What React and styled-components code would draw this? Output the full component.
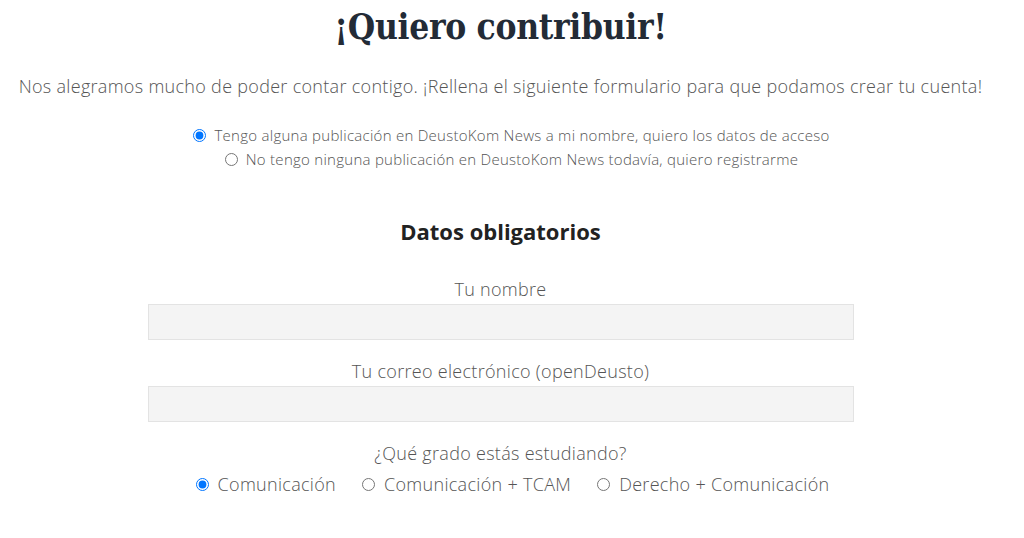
import styled, { createGlobalStyle } from 'styled-components';

const GlobalStyle = createGlobalStyle`
  body {
    margin: 0;
    background: #ffffff;
    font-family: "Open Sans", "Liberation Sans", sans-serif;
    color: #555555;
  }
`;

const Page = styled.main`
  display: flex;
  flex-direction: column;
  align-items: center;
  padding: 2px 23px 0 0;
`;

const Title = styled.h1`
  margin: 0;
  font-family: "DejaVu Serif Condensed", "DejaVu Serif", "Liberation Serif", serif;
  font-weight: 700;
  font-size: 35px;
  line-height: 50px;
  color: #232b36;
  letter-spacing: -0.3px;
`;

const Intro = styled.p`
  margin: 20px 0 0;
  font-size: 18px;
  font-weight: 300;
  letter-spacing: 0.3px;
  line-height: 28px;
  text-align: center;
`;

const Choices = styled.div`
  display: flex;
  flex-direction: column;
  align-items: center;
  margin: 23px 0 0 22px;
`;

const ChoiceLine = styled.label`
  display: flex;
  align-items: center;
  gap: 8px;
  font-size: 15px;
  font-weight: 300;
  letter-spacing: 0.27px;
  line-height: 24px;
`;

const Radio = styled.input.attrs({ type: 'radio' })`
  margin: 0;
  width: 13px;
  height: 13px;
  accent-color: #0075ff;
`;

const SectionTitle = styled.h2`
  margin: 45px 0 0;
  font-size: 22px;
  font-weight: 700;
  line-height: 30px;
  color: #222222;
`;

const Field = styled.div`
  display: flex;
  flex-direction: column;
  align-items: center;
  width: 706px;
  margin-top: ${p => p.$top}px;
`;

const Label = styled.label`
  font-size: 18px;
  font-weight: 300;
  letter-spacing: 0.3px;
  line-height: 26px;
  margin-bottom: 2px;
`;

const TextInput = styled.input`
  box-sizing: border-box;
  width: 100%;
  height: 36px;
  background: #f4f4f4;
  border: 1px solid #e3e3e3;
  outline: none;
`;

const DegreeRow = styled.div`
  display: flex;
  align-items: center;
  gap: 26px;
  margin: 4px 0 0 24px;
`;

const DegreeOption = styled.label`
  display: flex;
  align-items: center;
  gap: 9px;
  font-size: 18px;
  font-weight: 300;
  letter-spacing: 0.3px;
  line-height: 24px;
`;

export default function App() {
  return (
    <>
      <GlobalStyle />
      <Page>
        <Title>¡Quiero contribuir!</Title>
        <Intro>
          Nos alegramos mucho de poder contar contigo. ¡Rellena el siguiente formulario para que podamos crear tu cuenta!
        </Intro>
        <Choices>
          <ChoiceLine>
            <Radio name="cuenta" defaultChecked />
            Tengo alguna publicación en DeustoKom News a mi nombre, quiero los datos de acceso
          </ChoiceLine>
          <ChoiceLine>
            <Radio name="cuenta" />
            No tengo ninguna publicación en DeustoKom News todavía, quiero registrarme
          </ChoiceLine>
        </Choices>
        <SectionTitle>Datos obligatorios</SectionTitle>
        <Field $top={30}>
          <Label>Tu nombre</Label>
          <TextInput type="text" />
        </Field>
        <Field $top={18}>
          <Label>Tu correo electrónico (openDeusto)</Label>
          <TextInput type="email" />
        </Field>
        <Field $top={18}>
          <Label>¿Qué grado estás estudiando?</Label>
        </Field>
        <DegreeRow>
          <DegreeOption>
            <Radio name="grado" defaultChecked />
            Comunicación
          </DegreeOption>
          <DegreeOption>
            <Radio name="grado" />
            Comunicación + TCAM
          </DegreeOption>
          <DegreeOption>
            <Radio name="grado" />
            Derecho + Comunicación
          </DegreeOption>
        </DegreeRow>
      </Page>
    </>
  );
}
